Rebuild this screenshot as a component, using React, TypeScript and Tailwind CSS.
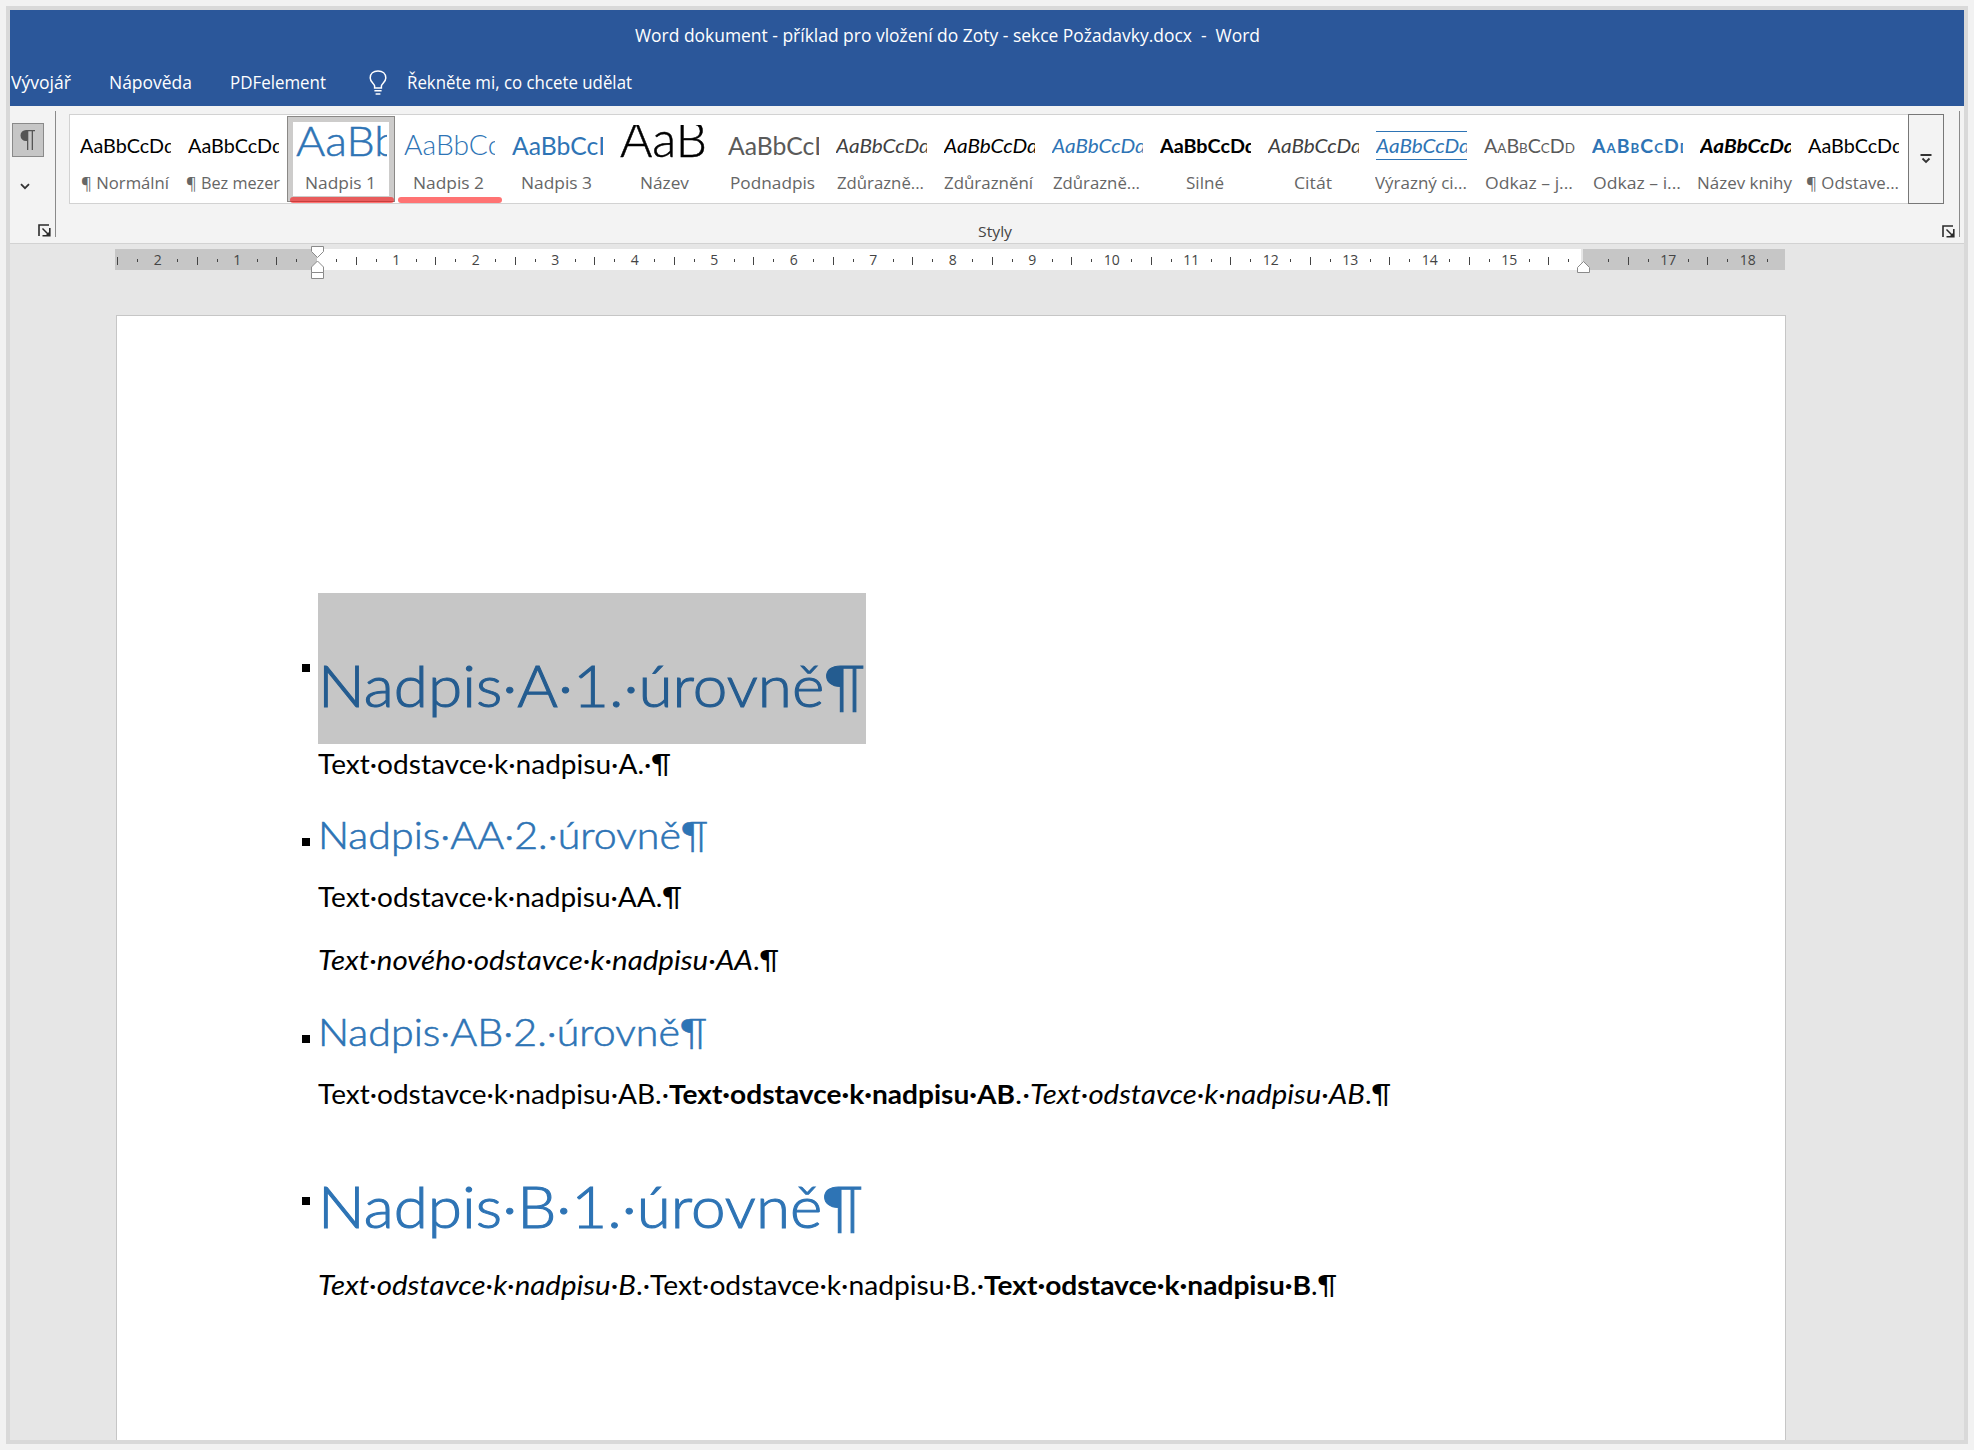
import { useLayoutEffect, useRef, useState, type ReactNode } from "react";

/** Text stretched horizontally so that its advance width equals `w` pixels. */
function Fit({ w, className = "", children }: { w: number; className?: string; children: ReactNode }) {
  const ref = useRef<HTMLSpanElement>(null);
  const [scale, setScale] = useState(1);
  useLayoutEffect(() => {
    const el = ref.current;
    if (!el) return;
    el.style.transform = "none";
    const natural = el.getBoundingClientRect().width;
    const next = natural ? w / natural : 1;
    el.style.transform = `scaleX(${next})`;
    setScale(next);
  }, [w]);
  return (
    <span className="inline-block shrink-0 whitespace-pre" style={{ width: w }}>
      <span ref={ref} className={`inline-block origin-left ${className}`} style={{ transform: `scaleX(${scale})` }}>
        {children}
      </span>
    </span>
  );
}

type Style = { label: string; lw: number; text: string; w: number; cls: string; lines?: boolean; selected?: boolean; marked?: boolean };

const styles: Style[] = [
  { label: "¶ Normální", lw: 88, text: "AaBbCcDd", w: 95, cls: "text-[19px] leading-[41px] text-black" },
  { label: "¶ Bez mezer", lw: 94, text: "AaBbCcDd", w: 95, cls: "text-[19px] leading-[41px] text-black" },
  { label: "Nadpis 1", lw: 71, text: "AaBb", w: 103, cls: "text-[41px] leading-[32px] font-light text-[#2e74b5] [-webkit-text-stroke:0.5px_#2e74b5]", selected: true, marked: true },
  { label: "Nadpis 2", lw: 71, text: "AaBbCc", w: 97, cls: "text-[26.5px] leading-[41px] font-light text-[#2e74b5]", marked: true },
  { label: "Nadpis 3", lw: 71, text: "AaBbCcD", w: 105, cls: "text-[24.3px] leading-[41px] text-[#2e74b5]" },
  { label: "Název", lw: 49, text: "AaB", w: 87, cls: "text-[49px] leading-[26px] font-light text-black [-webkit-text-stroke:0.5px_black]" },
  { label: "Podnadpis", lw: 85, text: "AaBbCcD", w: 105, cls: "text-[24.3px] leading-[41px] text-[#5a5a5a]" },
  { label: "Zdůrazně...", lw: 87, text: "AaBbCcDd", w: 94, cls: "text-[19px] leading-[41px] italic text-[#404040]" },
  { label: "Zdůraznění", lw: 89, text: "AaBbCcDd", w: 94, cls: "text-[19px] leading-[41px] italic text-black" },
  { label: "Zdůrazně...", lw: 87, text: "AaBbCcDd", w: 94, cls: "text-[19px] leading-[41px] italic text-[#2e74b5]" },
  { label: "Silné", lw: 38, text: "AaBbCcDd", w: 96, cls: "text-[19px] leading-[41px] font-bold text-black" },
  { label: "Citát", lw: 38, text: "AaBbCcDd", w: 94, cls: "text-[19px] leading-[41px] italic text-[#404040]" },
  { label: "Výrazný ci...", lw: 92, text: "AaBbCcDd", w: 94, cls: "text-[19px] leading-[41px] italic text-[#2e74b5]", lines: true },
  { label: "Odkaz – j...", lw: 88, text: "AaBbCcDd", w: 91, cls: "text-[19px] leading-[41px] [font-variant:small-caps] text-[#5a5a5a]" },
  { label: "Odkaz – i...", lw: 88, text: "AaBbCcDd", w: 99, cls: "text-[19px] leading-[41px] font-bold [font-variant:small-caps] tracking-[1px] text-[#2e74b5]" },
  { label: "Název knihy", lw: 95, text: "AaBbCcDd", w: 95, cls: "text-[19px] leading-[41px] font-bold italic text-black" },
  { label: "¶ Odstave...", lw: 93, text: "AaBbCcDd", w: 95, cls: "text-[19px] leading-[41px] text-black" },
];

function StyleCell({ s }: { s: Style }) {
  return (
    <div className="relative flex h-[88px] w-[108px] shrink-0 flex-col items-center">
      {s.selected && (
        <div className="absolute left-0 top-px h-[86px] w-[108px] border border-[#8a8886] bg-[#cdcccb] p-[5px]">
          <div className="h-full w-full bg-white" />
        </div>
      )}
      <div className="relative mt-2.5 flex h-[37px] w-[91px] items-start overflow-hidden font-['Lato',sans-serif]">
        <Fit w={s.w} className={s.cls}>{s.text}</Fit>
        {s.lines && <div className="absolute left-0 top-1.5 h-[29px] w-full border-y border-[#2e74b5]" />}
      </div>
      <div className="relative mt-[9px] mr-[1px] flex h-6 text-[17px] leading-6 text-[#666666]">
        <Fit w={s.lw}>{s.label}</Fit>
      </div>
      {s.marked && <div className="absolute left-[3px] top-[82px] h-1.5 w-[104px] rounded-full bg-[#ff0000]/55" />}
    </div>
  );
}

function Launcher() {
  return (
    <svg width="13" height="13" viewBox="0 0 13 13" fill="none" stroke="#2b2b2b" strokeWidth="1.6">
      <path d="M1 12V1h10" />
      <path d="M4.5 4.5l6 6" strokeWidth="1.5" />
      <path d="M11.800 4v7.800H4.500" strokeWidth="1.600" />
      <path d="M12 7v5H7z" fill="#2b2b2b" stroke="none" />
    </svg>
  );
}

function Bulb() {
  return (
    <svg width="18" height="26" viewBox="0 0 18 26" fill="none" stroke="#fff" strokeWidth="1.5">
      <path d="M5.600 18v-2.200C5.200 13.600 1.200 12 1.200 8 1.200 3.800 4.400 1 9 1s7.800 2.800 7.800 7c0 4-4 5.600-4.400 7.800V18z" />
      <path d="M5.400 20.800h7.200M6.600 24h4.800" />
    </svg>
  );
}

const slots = Array.from({ length: 84 }, (_, i) => (i - 10) / 4);

function Ruler() {
  return (
    <div className="relative mt-[5px] ml-[105px] h-[21px] w-[1670px]">
      <div className="flex h-[21px] overflow-hidden bg-[#c6c6c6]">
        <div className="ml-[202px] h-full w-[1264px] shrink-0 bg-white" />
        <div className="h-full w-[2px] bg-[#e6e6e6]" />
      </div>
      <div className="absolute inset-0 overflow-hidden">
        <div className="-ml-[7px] flex h-full items-center">
          {slots.map((v) => {
            const whole = Number.isInteger(v);
            const half = Number.isInteger(v * 2);
            return (
              <div key={v} className="flex w-[19.8825px] shrink-0 items-center justify-center text-[14px] leading-[20px] text-[#444]">
                {whole ? (
                  v !== 0 && v !== 16 && <span>{Math.abs(v)}</span>
                ) : half ? (
                  <span className="mt-[2px] h-2 w-px bg-[#444]" />
                ) : (
                  <span className="mt-[2px] h-[3px] w-px bg-[#444]" />
                )}
              </div>
            );
          })}
        </div>
      </div>
      <svg className="absolute -top-[3px] left-[196px]" width="14" height="34" viewBox="0 0 14 34" fill="#fff" stroke="#8a8a8a">
        <path d="M.5.5h12v5l-6 6-6-6z" />
        <path d="M.5 26.500v-5.500l6-6 6 6v5.500z" />
        <path d="M.5 26.500h12v6H.5z" />
      </svg>
      <svg className="absolute top-[12px] left-[1462px]" width="14" height="13" viewBox="0 0 14 13" fill="#fff" stroke="#8a8a8a">
        <path d="M.5 11.500v-5l6-6 6 6v5z" />
      </svg>
    </div>
  );
}

function Line({ className = "", children }: { className?: string; children: ReactNode }) {
  return <p className={`flex h-8 text-[27px] leading-8 text-black ${className}`}>{children}</p>;
}

function Heading({ className = "", bullet, children }: { className?: string; bullet: string; children: ReactNode }) {
  return (
    <div className={`relative flex ${className}`}>
      <span className={`absolute -left-4 size-2 bg-black ${bullet}`} />
      {children}
    </div>
  );
}

function Page() {
  return (
    <div className="mt-[45px] ml-[106px] h-[1125px] w-[1670px] border border-b-0 border-[#c6c6c6] bg-white pt-[277px] pl-[201px] font-['Lato',sans-serif]">
      <Heading bullet="top-[71px]" className="h-[151px] w-[548px] bg-[#c6c6c6] pt-[58px]">
        <Fit w={547} className="text-[57px] leading-[68px] font-light text-[#245c90] [-webkit-text-stroke:1px_#245c90]">Nadpis·A·1.·úrovně¶</Fit>
      </Heading>
      <Line className="mt-1">
        <Fit w={353}>Text·odstavce·k·nadpisu·A.·¶</Fit>
      </Line>
      <Heading bullet="top-[27px]" className="mt-[31px] h-[47px]">
        <Fit w={390} className="text-[38px] leading-[46px] font-light text-[#2e74b5] [-webkit-text-stroke:0.6px_#2e74b5]">Nadpis·AA·2.·úrovně¶</Fit>
      </Heading>
      <Line className="mt-[23px]">
        <Fit w={364}>Text·odstavce·k·nadpisu·AA.¶</Fit>
      </Line>
      <Line className="mt-[31px]">
        <Fit w={435} className="italic">Text·nového·odstavce·k·nadpisu·AA</Fit>
        <Fit w={26}>.¶</Fit>
      </Line>
      <Heading bullet="top-[27px]" className="mt-8 h-[47px]">
        <Fit w={389} className="text-[38px] leading-[46px] font-light text-[#2e74b5] [-webkit-text-stroke:0.6px_#2e74b5]">Nadpis·AB·2.·úrovně¶</Fit>
      </Heading>
      <Line className="mt-[23px]">
        <Fit w={351}>Text·odstavce·k·nadpisu·AB.·</Fit>
        <Fit w={346} className="font-bold">Text·odstavce·k·nadpisu·AB</Fit>
        <Fit w={15}>.·</Fit>
        <Fit w={335} className="italic">Text·odstavce·k·nadpisu·AB</Fit>
        <Fit w={26}>.¶</Fit>
      </Line>
      <Heading bullet="top-[25px]" className="mt-[62px] h-[69px]">
        <Fit w={545} className="text-[57px] leading-[68px] font-light text-[#2e74b5] [-webkit-text-stroke:1px_#2e74b5]">Nadpis·B·1.·úrovně¶</Fit>
      </Heading>
      <Line className="mt-7">
        <Fit w={318} className="italic">Text·odstavce·k·nadpisu·B</Fit>
        <Fit w={348}>.·Text·odstavce·k·nadpisu·B.·</Fit>
        <Fit w={327} className="font-bold">Text·odstavce·k·nadpisu·B</Fit>
        <Fit w={26}>.¶</Fit>
      </Line>
    </div>
  );
}

export default function App() {
  return (
    <div className="h-[1450px] w-[1974px] overflow-hidden bg-[#f2f2f2] p-1.5 font-['Open_Sans',sans-serif]">
      <div className="h-[1438px] w-[1962px] overflow-hidden border-4 border-[#d9d9d9] bg-[#e6e6e6]">
        <header className="h-24 bg-[#2b579a] text-[18px] text-white">
          <div className="flex h-[52px] pt-[13px] pl-[625px] leading-6">
            <Fit w={625}>{"Word dokument - příklad pro vložení do Zoty - sekce Požadavky.docx  -  Word"}</Fit>
          </div>
          <nav className="flex h-11 items-start pt-2 pl-px leading-6">
            <Fit w={60}>Vývojář</Fit>
            <span className="w-[38px]" />
            <Fit w={83}>Nápověda</Fit>
            <span className="w-[38px]" />
            <Fit w={96}>PDFelement</Fit>
            <span className="ml-[43px] w-[38px]"><Bulb /></span>
            <Fit w={225}>Řekněte mi, co chcete udělat</Fit>
          </nav>
        </header>

        <section className="flex h-[138px] border-b border-[#d2d2d2] bg-[#f3f3f3]">
          <div className="mt-[5px] flex h-[126px] w-[46px] shrink-0 flex-col border-r border-[#8a8a8a]">
            <div className="mt-3 ml-[2px] flex h-[34px] w-8 items-center justify-center border border-[#8a8a8a] bg-[#c6c6c6]">
              <svg className="-ml-[2px]" width="17" height="22" viewBox="0 0 17 22" fill="#555">
                <path d="M7 1h9v1.300h-2V21h-1.300V2.300H9.300V21H8V12H7A5.500 5.500 0 0 1 7 1z" />
              </svg>
            </div>
            <svg className="mt-[26px] ml-[10px]" width="10" height="7" viewBox="0 0 10 7" fill="none" stroke="#333" strokeWidth="1.800">
              <path d="M1 1.200l4 4 4-4" />
            </svg>
            <div className="mt-auto ml-7"><Launcher /></div>
          </div>
          <div className="mt-2 ml-[13px] flex w-[1885px] shrink-0 flex-col">
            <div className="flex h-[90px] w-[1875px]">
              <div className="flex w-[1839px] border border-r-0 border-[#d2d2d2] bg-white pl-px">
                {styles.map((s, i) => (
                  <StyleCell key={i} s={s} />
                ))}
              </div>
              <div className="flex w-9 items-center justify-center border border-[#777]">
                <svg width="12" height="10" viewBox="0 0 12 10" fill="none" stroke="#333" strokeWidth="1.800">
                  <path d="M.5 1h11M2.500 4.500L6 8l3.500-3.500" />
                </svg>
              </div>
            </div>
            <div className="mt-[17px] flex pl-[909px] text-[15px] leading-5 text-[#444]">
              <Fit w={34}>Styly</Fit>
              <div className="mt-1 ml-[930px]"><Launcher /></div>
            </div>
          </div>
          <div className="mt-[5px] ml-[5px] h-[126px] w-px shrink-0 bg-[#8a8a8a]" />
        </section>

        <Ruler />
        <Page />
      </div>
    </div>
  );
}
